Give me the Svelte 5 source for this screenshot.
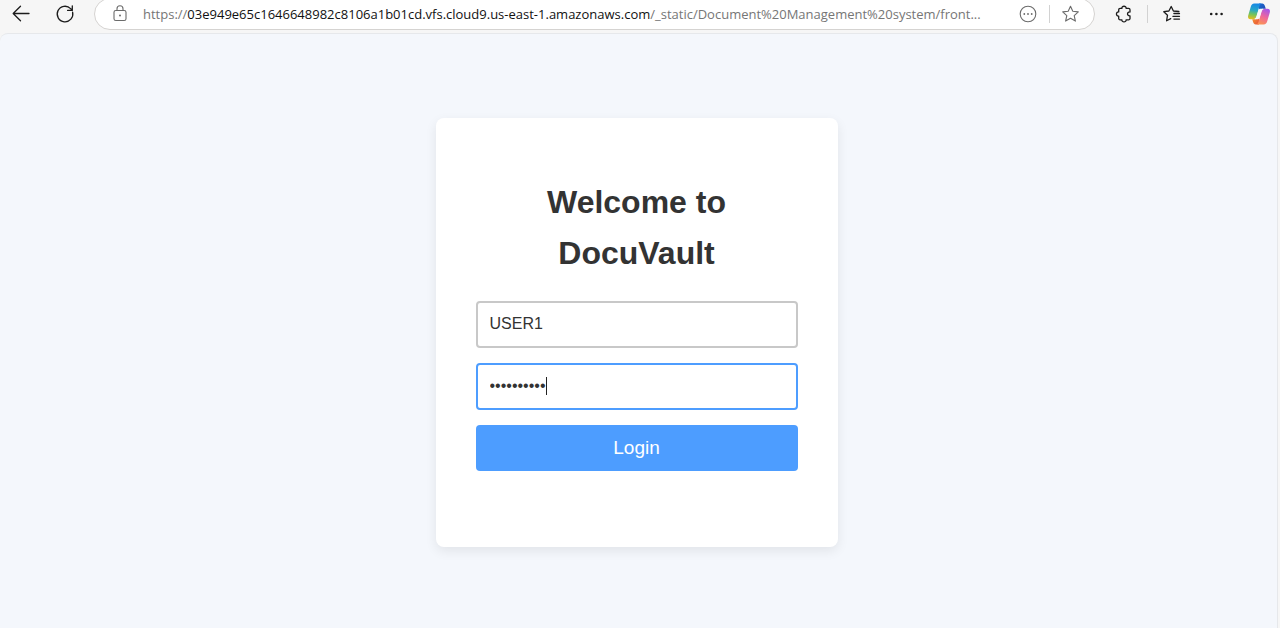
<script>
  let username = $state('USER1');
  let password = $state('docuvault1');
  let editing = $state(false);

  const scheme = 'https://';
  const host = '03e949e65c1646648982c8106a1b01cd.vfs.cloud9.us-east-1.amazonaws.com';
  const path = '/_static/Document%20Management%20system/front...';
  let address = $state(scheme + host + path);
</script>

<div class="window">
  <header class="toolbar">
    <button class="tool" aria-label="Back">
      <svg width="20" height="20" viewBox="0 0 20 20"><path d="M18 9.5H2.5M9.5 2.3 2.2 9.5l7.3 7.2" /></svg>
    </button>
    <button class="tool" aria-label="Refresh">
      <svg width="20" height="20" viewBox="0 0 20 20"><path d="M17.6 8.2A7.8 7.8 0 1 1 15.6 4.6L17.3 6.3M17.3 1.8V6.4H12.6" /></svg>
    </button>

    <div class="address">
      <button class="site" aria-label="View site information">
        <svg width="18" height="20" viewBox="0 0 18 20">
          <rect x="3" y="6.5" width="12" height="10" rx="1.8" />
          <path d="M6 6.5V4.7a3 3 0 0 1 6 0v1.8" />
          <circle class="dot" cx="9" cy="11.6" r="1" />
        </svg>
      </button>
      {#if editing}
        <input class="url" aria-label="Address" bind:value={address} onblur={() => (editing = false)} />
      {:else}
        <button class="url" onclick={() => (editing = true)}>{scheme}<span class="host">{host}</span>{path}</button>
      {/if}
      <button class="inner" aria-label="Page actions">
        <svg width="20" height="20" viewBox="0 0 20 20">
          <circle cx="10" cy="10" r="7.8" />
          <g class="dot"><circle cx="6.3" cy="10" r="0.9" /><circle cx="10" cy="10" r="0.9" /><circle cx="13.7" cy="10" r="0.9" /></g>
        </svg>
      </button>
      <span class="divider"></span>
      <button class="inner" aria-label="Add this page to favorites">
        <svg width="20" height="20" viewBox="0 0 20 20"><path d="M9.5 2.2 11.8 7.3 17.3 7.9 13.2 11.6 14.4 17.1 9.5 14.3 4.6 17.1 5.8 11.6 1.7 7.9 7.2 7.3Z" /></svg>
      </button>
    </div>

    <button class="tool" aria-label="Extensions">
      <svg width="20" height="20" viewBox="0 0 20 20"><path d="M6.1 4.4H7.9C7.5 1.5 12.5 1.5 12.1 4.4H14.6A1.4 1.4 0 0 1 16 5.8V8C12.7 7.6 12.7 12.2 16 11.8V14.4A1.4 1.4 0 0 1 14.6 15.8H12.1C12.5 18.6 7.5 18.6 7.9 15.8H6.1A1.4 1.4 0 0 1 4.7 14.4V12.1C1.7 12.5 1.7 7.5 4.7 7.9V5.8A1.4 1.4 0 0 1 6.1 4.4Z" /></svg>
    </button>
    <span class="divider"></span>
    <button class="tool" aria-label="Favorites">
      <svg width="20" height="20" viewBox="0 0 20 20"><path d="M17.9 7.5 12.4 7 10.2 2.5 7.9 7 2.8 7.7 6.5 11.2 5.6 16.8 9.7 14.6M12.9 9.5H18.5M11.9 12.3H18.5M12.9 15.1H18.5" /></svg>
    </button>
    <button class="tool" aria-label="Settings and more">
      <svg width="20" height="20" viewBox="0 0 20 20"><g class="dot"><circle cx="6.2" cy="10" r="1.3" /><circle cx="11.4" cy="10" r="1.3" /><circle cx="16.6" cy="10" r="1.3" /></g></svg>
    </button>
    <button class="tool" aria-label="Copilot">
      <svg class="copilot" width="24" height="24" viewBox="0 0 24 24">
        <defs>
          <linearGradient id="cool" x1="0.5" y1="0" x2="0.35" y2="1">
            <stop offset="0" stop-color="#1687e5" /><stop offset="0.4" stop-color="#25a7c9" /><stop offset="0.7" stop-color="#74c45b" /><stop offset="1" stop-color="#e5bd20" />
          </linearGradient>
          <linearGradient id="warm" x1="0.7" y1="0" x2="0.3" y2="1">
            <stop offset="0" stop-color="#a855e8" /><stop offset="0.5" stop-color="#ef679b" /><stop offset="1" stop-color="#fb9453" />
          </linearGradient>
          <linearGradient id="deep" x1="0" y1="0" x2="1" y2="1">
            <stop offset="0" stop-color="#1769d2" /><stop offset="1" stop-color="#2446aa" />
          </linearGradient>
          <linearGradient id="ember" x1="0" y1="0" x2="1" y2="1">
            <stop offset="0" stop-color="#f4a12e" /><stop offset="1" stop-color="#e9513c" />
          </linearGradient>
        </defs>
        <path fill="url(#deep)" d="M12 1.6h3.2c1.5 0 2.2.9 2.7 2.4l.9 2.8h-3.3c-1.6 0-2.5.8-3 2.4L12 10.6Z" />
        <path fill="url(#ember)" d="M12 22.4H8.8c-1.5 0-2.2-.9-2.7-2.4l-.9-2.8h3.3c1.6 0 2.5-.8 3-2.4L12 13.4Z" />
        <path fill="url(#cool)" d="M7.3 1.6h7.2c-1.2.6-1.7 1.6-2.2 3.2L9.5 14c-.7 2.2-1.8 3.2-4 3.2H3.6c-2.2 0-3-1.5-2.4-3.7L3.7 5c.6-2.1 1.6-3.4 3.6-3.4Z" />
        <path fill="url(#warm)" d="M16.7 22.4H9.5c1.2-.6 1.7-1.6 2.2-3.2l2.8-9.2c.7-2.2 1.8-3.2 4-3.2h1.9c2.2 0 3 1.5 2.4 3.7L20.3 19c-.6 2.1-1.6 3.4-3.6 3.4Z" />
        <path fill="#f8f8fa" d="M13.2 6.8h3c-1 .6-1.5 1.5-1.8 2.6l-1.9 6.4c-.3.8-.8 1.4-1.6 1.4H7.8c1-.6 1.5-1.5 1.8-2.6l1.9-6.4c.3-.8.8-1.4 1.7-1.4Z" />
      </svg>
    </button>
  </header>

  <main class="page">
    <form class="card" onsubmit={(e) => e.preventDefault()}>
      <h1>Welcome to DocuVault</h1>
      <input class="field" type="text" aria-label="Username" bind:value={username} />
      <div class="secret">
        <input class="field active" type="password" aria-label="Password" bind:value={password} />
        <span class="caret"></span>
      </div>
      <button class="login" type="submit">Login</button>
    </form>
  </main>
</div>

<style>
  :global(body) {
    margin: 0;
    background: #f6f6f6;
  }

  .window {
    display: flex;
    flex-direction: column;
    min-height: 100vh;
    overflow: hidden;
    font-family: 'Liberation Sans', Arial, sans-serif;
    color: #333;
  }

  button {
    margin: 0;
    padding: 0;
    border: 0;
    background: none;
    font: inherit;
    color: inherit;
    cursor: pointer;
  }

  svg {
    display: block;
    fill: none;
    stroke: #1c1c1c;
    stroke-width: 1.3;
    stroke-linecap: round;
    stroke-linejoin: round;
  }

  .dot {
    fill: #1c1c1c;
    stroke: none;
  }

  .copilot {
    stroke: none;
  }

  .toolbar {
    display: flex;
    align-items: center;
    height: 28px;
    padding-bottom: 5px;
  }

  .tool {
    display: grid;
    place-items: center;
    flex: 0 0 42px;
    height: 28px;
  }

  .tool + .tool {
    margin-left: 2px;
  }

  .divider {
    flex: 0 0 1px;
    height: 18px;
    margin: 0 2px;
    background: #d2d2d2;
  }

  .address {
    display: flex;
    flex: 1;
    align-items: center;
    min-width: 0;
    height: 32px;
    margin: 0 8px;
    box-sizing: border-box;
    padding: 0 4px 0 16px;
    border: 1px solid #d5d3d1;
    border-radius: 16px;
    background: #fff;
  }

  .address svg {
    stroke: #6b6b6b;
    stroke-width: 1.1;
  }

  .address .dot {
    fill: #6b6b6b;
  }

  .site {
    flex: none;
    margin-right: 14px;
  }

  .inner {
    display: grid;
    place-items: center;
    flex: 0 0 38px;
    height: 28px;
  }

  .url {
    flex: 1;
    min-width: 0;
    overflow: hidden;
    border: 0;
    outline: 0;
    font-family: 'Open Sans', 'Segoe UI', sans-serif;
    font-size: 13px;
    line-height: 20px;
    text-align: left;
    white-space: nowrap;
    color: #767676;
  }

  .host {
    color: #111;
  }

  .page {
    display: flex;
    flex: 1;
    align-items: center;
    justify-content: center;
    margin-right: 2px;
    padding: 2px 4px 0 0;
    border: 1px solid #e6e8eb;
    border-width: 1px 1px 0 0;
    border-radius: 8px 8px 0 0;
    background: #f4f7fc;
  }

  .card {
    display: flex;
    flex-direction: column;
    gap: 15px;
    box-sizing: border-box;
    width: 402px;
    margin: 24px 0;
    padding: 59px 40px 76px;
    border-radius: 8px;
    background: #fff;
    box-shadow: 0 4px 12px rgba(0, 0, 0, 0.08);
  }

  h1 {
    margin: 0 40px 7px;
    font-size: 32px;
    line-height: 51px;
    text-align: center;
  }

  .field {
    display: block;
    box-sizing: border-box;
    width: 100%;
    height: 47px;
    padding: 0 12px;
    border: 2px solid #c8c8c8;
    border-radius: 4px;
    outline: 0;
    background: #fff;
    font-family: inherit;
    font-size: 16px;
    color: #333;
  }

  .active {
    border-color: #4d9dff;
  }

  .secret {
    position: relative;
  }

  .caret {
    position: absolute;
    top: 14px;
    left: 70px;
    width: 1px;
    height: 18px;
    background: #222;
  }

  .login {
    height: 46px;
    border-radius: 4px;
    background: #4d9dff;
    font-size: 19px;
    color: #fff;
  }
</style>
